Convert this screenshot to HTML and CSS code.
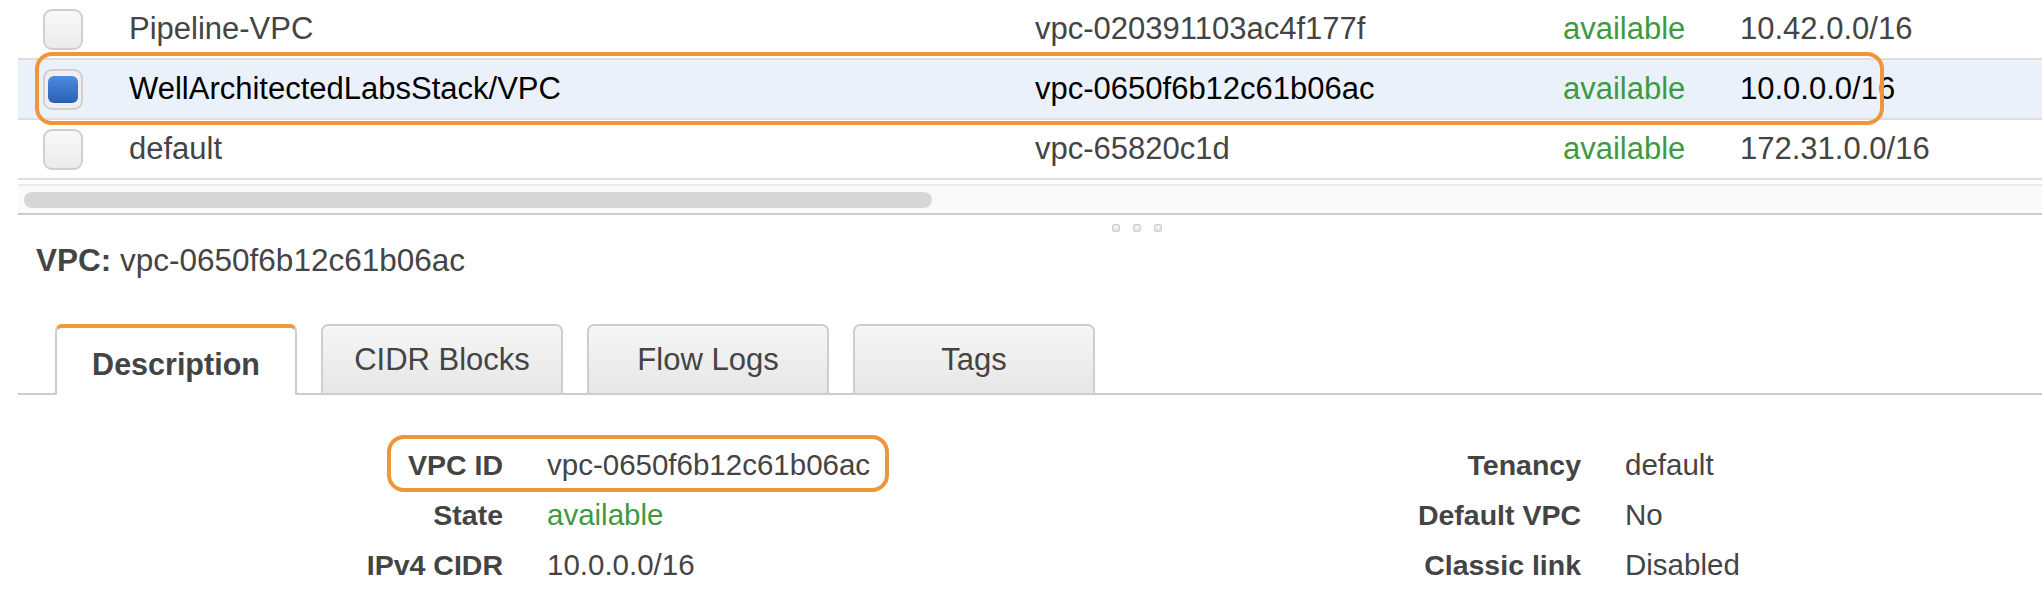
FILE: index.html
```html
<!DOCTYPE html>
<html>
<head>
<meta charset="utf-8">
<link rel="stylesheet" href="styles.css">
</head>
<body>
<div class="page">
  <div class="table">
    <div class="row">
      <div class="cell"><span class="check"></span></div>
      <div class="cell">Pipeline-VPC</div>
      <div class="cell">vpc-020391103ac4f177f</div>
      <div class="cell ok">available</div>
      <div class="cell">10.42.0.0/16</div>
    </div>
    <div class="row selected">
      <div class="cell"><span class="check checked"><span class="mark"></span></span></div>
      <div class="cell">WellArchitectedLabsStack/VPC</div>
      <div class="cell">vpc-0650f6b12c61b06ac</div>
      <div class="cell ok">available</div>
      <div class="cell">10.0.0.0/16</div>
    </div>
    <div class="row">
      <div class="cell"><span class="check"></span></div>
      <div class="cell">default</div>
      <div class="cell">vpc-65820c1d</div>
      <div class="cell ok">available</div>
      <div class="cell">172.31.0.0/16</div>
    </div>
    <div class="callout row-callout"></div>
  </div>
  <div class="hscroll"><div class="thumb"></div></div>
  <div class="splitter">
    <svg class="grip" width="8" height="8" viewBox="0 0 8 8"><rect x="0.5" y="0.5" width="7" height="7" rx="1.5" fill="#e4e4e4" stroke="#cfcfcf"/><path d="M1.5 2.5 L6.5 2.5 L4 5 Z" fill="#fff"/></svg>
    <svg class="grip" width="8" height="8" viewBox="0 0 8 8"><rect x="0.5" y="0.5" width="7" height="7" rx="1.5" fill="#e4e4e4" stroke="#cfcfcf"/><path d="M1.5 2.5 L6.5 2.5 L4 5 Z" fill="#fff"/></svg>
    <svg class="grip" width="8" height="8" viewBox="0 0 8 8"><rect x="0.5" y="0.5" width="7" height="7" rx="1.5" fill="#e4e4e4" stroke="#cfcfcf"/><path d="M1.5 2.5 L6.5 2.5 L4 5 Z" fill="#fff"/></svg>
  </div>
  <div class="heading"><b>VPC:</b> vpc-0650f6b12c61b06ac</div>
  <div class="tabs">
    <div class="tab active">Description</div>
    <div class="tab">CIDR Blocks</div>
    <div class="tab">Flow Logs</div>
    <div class="tab">Tags</div>
  </div>
  <div class="details">
    <div class="label">VPC ID</div><div class="value">vpc-0650f6b12c61b06ac</div>
    <div class="label">Tenancy</div><div class="value">default</div>
    <div class="label">State</div><div class="value ok">available</div>
    <div class="label">Default VPC</div><div class="value">No</div>
    <div class="label">IPv4 CIDR</div><div class="value">10.0.0.0/16</div>
    <div class="label">Classic link</div><div class="value">Disabled</div>
    <div class="callout id-callout"></div>
  </div>
</div>
</body>
</html>
```

FILE: styles.css
```css
html, body {
  margin: 0;
  padding: 0;
  background: #fff;
}
body {
  width: 2042px;
  height: 592px;
  overflow: hidden;
  font-family: "Helvetica Neue", Helvetica, "Liberation Sans", Arial, sans-serif;
  font-size: 31px;
  color: #444;
}
.page {
  padding-left: 18px;
}
.table {
  position: relative;
}
.row {
  display: grid;
  grid-template-columns: 111px 906px 528px 177px 1fr;
  align-items: center;
  height: 58px;
  border-bottom: 2px solid #dedede;
}
.row.selected {
  background: #eaf1fb;
  color: #000;
}
.cell {
  white-space: nowrap;
  line-height: 36px;
}
.check {
  display: flex;
  align-items: center;
  justify-content: center;
  box-sizing: border-box;
  width: 40px;
  height: 41px;
  margin-left: 25px;
  border: 2px solid #cfcfcf;
  border-radius: 9px;
  background: linear-gradient(#fafafa, #ebebeb);
}
.check.checked {
  background: #efefef;
}
.mark {
  width: 30px;
  height: 27px;
  border-radius: 6px;
  background: linear-gradient(#4d8ce0, #2a5fb6);
}
.ok {
  color: #3d9a3f;
}
.callout {
  position: absolute;
  box-sizing: border-box;
  border: 4px solid #f0963a;
  border-radius: 17px;
  pointer-events: none;
}
.row-callout {
  left: 17px;
  top: 52px;
  width: 1849px;
  height: 73px;
}
.hscroll {
  margin-top: 4px;
  height: 21px;
  border-top: 2px solid #ebebeb;
  border-bottom: 2px solid #cacaca;
  background: #fafafa;
  padding-top: 6px;
}
.thumb {
  width: 908px;
  height: 16px;
  margin-left: 6px;
  border-radius: 8px;
  background: #d6d6d6;
}
.splitter {
  display: flex;
  gap: 13px;
  height: 24px;
  padding-top: 9px;
  padding-left: 1094px;
  box-sizing: border-box;
}
.grip {
  display: block;
}
.heading {
  margin-top: 3px;
  padding-left: 18px;
  line-height: 36px;
  font-size: 31.5px;
  white-space: nowrap;
}
.heading b {
  font-weight: bold;
}
.tabs {
  display: flex;
  gap: 24px;
  margin-top: 46px;
  padding-left: 37px;
  border-bottom: 2px solid #cccccc;
  height: 69px;
}
.tab {
  box-sizing: border-box;
  width: 242px;
  height: 69px;
  padding-top: 16px;
  line-height: 36px;
  text-align: center;
  border: 2px solid #cdcdcd;
  border-bottom: none;
  border-radius: 7px 7px 0 0;
  background: linear-gradient(#f6f6f6, #e6e6e6);
  white-space: nowrap;
}
.tab.active {
  height: 71px;
  padding-top: 18px;
  border-top: 4px solid #f19a38;
  background: #fff;
  font-weight: bold;
  font-size: 30.5px;
}
.details {
  position: relative;
  display: grid;
  grid-template-columns: 485px 500px 490px 1fr;
  grid-auto-rows: 50px;
  column-gap: 44px;
  align-items: center;
  margin-top: 45px;
  font-size: 29.5px;
}
.label {
  text-align: right;
  font-weight: bold;
  font-size: 28.5px;
  white-space: nowrap;
}
.value {
  white-space: nowrap;
}
.id-callout {
  left: 369px;
  top: -5px;
  width: 502px;
  height: 57px;
}
```
